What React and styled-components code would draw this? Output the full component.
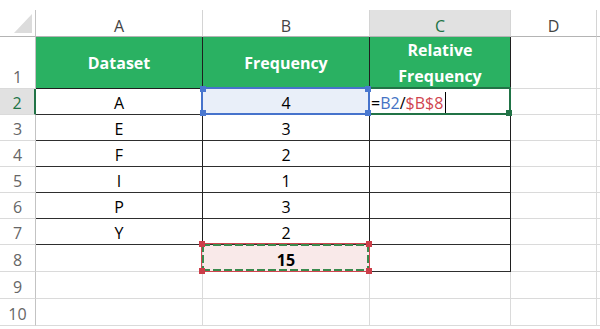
import React from "react";
import styled, { createGlobalStyle, css } from "styled-components";

const GRID = "#dadada";
const DARK = "#1f1f1f";
const XL_GREEN = "#217346";
const FONT = `"Open Sans", Lato, "Noto Sans", sans-serif`;

const Global = createGlobalStyle`
  html, body { margin: 0; padding: 0; background: #fff; }
  body { font-family: ${FONT}; }
`;

const Sheet = styled.div`
  display: grid;
  grid-template-columns: 36px 167px 167px 141px 86px 1fr;
  grid-template-rows: 27px 52px repeat(6, 26px) repeat(3, 27px);
  padding-top: 10px;
  width: 600px;
  font-family: ${FONT};
  font-size: 16px;
`;

const base = css`
  box-sizing: border-box;
  position: relative;
  display: flex;
  align-items: flex-end;
  justify-content: center;
  line-height: 20px;
  white-space: nowrap;
`;

const Corner = styled.div`
  ${base};
  justify-content: flex-end;
  padding: 0 3px 3px 0;
  border-right: 1px solid #c3c3c3;
  border-bottom: 1px solid #b4b4b4;
`;

const Triangle = styled.div`
  width: 18px;
  height: 19px;
  background: #dcdcdc;
  clip-path: polygon(100% 0, 100% 100%, 0 100%);
`;

const ColHeader = styled.div`
  ${base};
  color: ${(p) => (p.$active ? XL_GREEN : "#444")};
  background: ${(p) => (p.$active ? "#e1e1e1" : "#fff")};
  border-right: 1px solid #d4d4d4;
  border-bottom: 1px solid #b4b4b4;
`;

const RowHeader = styled.div`
  ${base};
  padding-bottom: 1px;
  color: ${(p) => (p.$active ? XL_GREEN : "#666")};
  background: ${(p) => (p.$active ? "#e1e1e1" : "#fff")};
  border-right: ${(p) => (p.$active ? `2px solid ${XL_GREEN}` : "1px solid #c3c3c3")};
  border-bottom: 1px solid ${GRID};
`;

const Title = styled.div`
  ${base};
  align-items: center;
  text-align: center;
  line-height: 26px;
  white-space: normal;
  font-weight: 700;
  color: #fff;
  background: #2ab162;
  border-right: 1px solid ${DARK};
  border-bottom: 1px solid ${DARK};
`;

const Cell = styled.div`
  ${base};
  padding-bottom: 1px;
  color: #000;
  font-weight: ${(p) => (p.$bold ? 700 : 400)};
  background: ${(p) => p.$fill || "#fff"};
  border-right: 1px solid ${(p) => (p.$rDark ? DARK : GRID)};
  border-bottom: 1px solid ${(p) => (p.$bDark ? "#2e2e2e" : GRID)};
`;

const EditCell = styled(Cell)`
  justify-content: flex-start;
  padding-left: 1px;
`;

const Ref = styled.span`
  color: ${(p) => p.$c};
`;

const Caret = styled.span`
  display: inline-block;
  width: 1px;
  height: 21px;
  background: #000;
  margin-left: 2px;
  align-self: center;
  position: relative;
  top: 1px;
`;

const Frame = styled.div`
  position: absolute;
  top: -2px;
  left: -2px;
  right: -1px;
  bottom: -1px;
  box-sizing: border-box;
  z-index: ${(p) => p.$z || 2};
  pointer-events: none;
`;

const SolidFrame = styled(Frame)`
  border: 2px solid ${(p) => p.$color};
`;

const MarqueeFrame = styled(Frame)`
  border: 1px solid #d0454f;
`;

const Dashes = styled.div`
  position: absolute;
  inset: 0;
  background:
    repeating-linear-gradient(90deg, #3a8a4e 0 8px, transparent 8px 11px) left top / 100% 2px no-repeat,
    repeating-linear-gradient(90deg, #3a8a4e 0 8px, transparent 8px 11px) left bottom / 100% 2px no-repeat,
    repeating-linear-gradient(180deg, #3a8a4e 0 8px, transparent 8px 11px) left top / 2px 100% no-repeat,
    repeating-linear-gradient(180deg, #3a8a4e 0 8px, transparent 8px 11px) right top / 2px 100% no-repeat;
`;

const Handle = styled.span`
  position: absolute;
  width: 6px;
  height: 6px;
  background: ${(p) => p.$color};
  ${(p) => (p.$top ? "top: -3px;" : "bottom: -3px;")}
  ${(p) => (p.$left ? "left: -3px;" : "right: -3px;")}
`;

const Handles = ({ color, corners = ["tl", "tr", "bl", "br"] }) =>
  corners.map((c) => (
    <Handle key={c} $color={color} $top={c[0] === "t"} $left={c[1] === "l"} />
  ));

const Filler = styled.div`
  box-sizing: border-box;
  border-bottom: 1px solid ${(p) => (p.$head ? "#b4b4b4" : GRID)};
`;

const data = [
  ["E", "3"],
  ["F", "2"],
  ["I", "1"],
  ["P", "3"],
  ["Y", "2"],
];

export default function App() {
  return (
    <>
      <Global />
      <Sheet>
        <Corner>
          <Triangle />
        </Corner>
        <ColHeader>A</ColHeader>
        <ColHeader>B</ColHeader>
        <ColHeader $active>C</ColHeader>
        <ColHeader>D</ColHeader>
        <Filler $head />

        <RowHeader>1</RowHeader>
        <Title>Dataset</Title>
        <Title>Frequency</Title>
        <Title>
          Relative
          <br />
          Frequency
        </Title>
        <Cell />
        <Filler />

        <RowHeader $active>2</RowHeader>
        <Cell $rDark $bDark>A</Cell>
        <Cell $rDark $bDark $fill="#e9eff9">
          4
          <SolidFrame $color="#4673cc" $z={4}>
            <Handles color="#4a78d0" />
          </SolidFrame>
        </Cell>
        <EditCell $rDark $bDark>
          =<Ref $c="#4472c4">B2</Ref>/<Ref $c="#d0454f">$B$8</Ref>
          <Caret />
          <SolidFrame $color={XL_GREEN} $z={3}>
            <Handles color={XL_GREEN} corners={["br"]} />
          </SolidFrame>
        </EditCell>
        <Cell />
        <Filler />

        {data.map(([label, freq], i) => (
          <React.Fragment key={label}>
            <RowHeader>{i + 3}</RowHeader>
            <Cell $rDark $bDark>{label}</Cell>
            <Cell $rDark $bDark>{freq}</Cell>
            <Cell $rDark $bDark />
            <Cell />
            <Filler />
          </React.Fragment>
        ))}

        <RowHeader>8</RowHeader>
        <Cell />
        <Cell $bold $fill="#f9e9e9">
          15
          <MarqueeFrame>
            <Dashes />
            <Handles color="#cc3f4a" />
          </MarqueeFrame>
        </Cell>
        <Cell $rDark $bDark />
        <Cell />
        <Filler />

        {[9, 10].map((n) => (
          <React.Fragment key={n}>
            <RowHeader>{n}</RowHeader>
            <Cell />
            <Cell />
            <Cell />
            <Cell />
            <Filler />
          </React.Fragment>
        ))}
      </Sheet>
    </>
  );
}
